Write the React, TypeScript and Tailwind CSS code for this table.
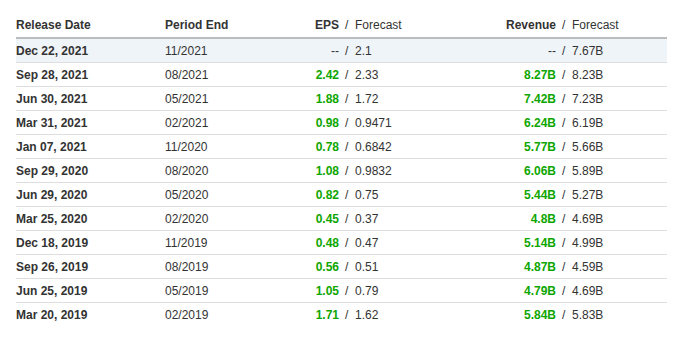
import React from 'react';

interface EarningsRow {
  date: string;
  period: string;
  eps: string;
  epsForecast: string;
  revenue: string;
  revenueForecast: string;
}

const rows: EarningsRow[] = [
  { date: 'Dec 22, 2021', period: '11/2021', eps: '--', epsForecast: '2.1', revenue: '--', revenueForecast: '7.67B' },
  { date: 'Sep 28, 2021', period: '08/2021', eps: '2.42', epsForecast: '2.33', revenue: '8.27B', revenueForecast: '8.23B' },
  { date: 'Jun 30, 2021', period: '05/2021', eps: '1.88', epsForecast: '1.72', revenue: '7.42B', revenueForecast: '7.23B' },
  { date: 'Mar 31, 2021', period: '02/2021', eps: '0.98', epsForecast: '0.9471', revenue: '6.24B', revenueForecast: '6.19B' },
  { date: 'Jan 07, 2021', period: '11/2020', eps: '0.78', epsForecast: '0.6842', revenue: '5.77B', revenueForecast: '5.66B' },
  { date: 'Sep 29, 2020', period: '08/2020', eps: '1.08', epsForecast: '0.9832', revenue: '6.06B', revenueForecast: '5.89B' },
  { date: 'Jun 29, 2020', period: '05/2020', eps: '0.82', epsForecast: '0.75', revenue: '5.44B', revenueForecast: '5.27B' },
  { date: 'Mar 25, 2020', period: '02/2020', eps: '0.45', epsForecast: '0.37', revenue: '4.8B', revenueForecast: '4.69B' },
  { date: 'Dec 18, 2019', period: '11/2019', eps: '0.48', epsForecast: '0.47', revenue: '5.14B', revenueForecast: '4.99B' },
  { date: 'Sep 26, 2019', period: '08/2019', eps: '0.56', epsForecast: '0.51', revenue: '4.87B', revenueForecast: '4.59B' },
  { date: 'Jun 25, 2019', period: '05/2019', eps: '1.05', epsForecast: '0.79', revenue: '4.79B', revenueForecast: '4.69B' },
  { date: 'Mar 20, 2019', period: '02/2019', eps: '1.71', epsForecast: '1.62', revenue: '5.84B', revenueForecast: '5.83B' },
];

const cols = 'grid grid-cols-[149px_130px_44px_161px_56px_112px] items-center';

const App: React.FC = () => {
  return (
    <div className="w-[683px] h-[341px] bg-white text-[12px] text-[#333] font-['Liberation_Sans',Arial,sans-serif] pt-[13px] px-[16px]">
      <div className={`${cols} h-[26px] border-b-2 border-[#bcbcbc]`}>
        <div className="font-bold">Release Date</div>
        <div className="font-bold">Period End</div>
        <div className="font-bold text-right">EPS</div>
        <div className="pl-[6px] whitespace-pre">/  Forecast</div>
        <div className="font-bold text-right">Revenue</div>
        <div className="pl-[6px] whitespace-pre">/  Forecast</div>
      </div>
      {rows.map((row, i) => (
        <div
          key={row.date}
          className={`${cols} h-[24px] ${i < rows.length - 1 ? 'border-b border-[#dedede]' : ''} ${i === 0 ? 'bg-[#eff4f8]' : ''}`}
        >
          <div className="font-bold">{row.date}</div>
          <div>{row.period}</div>
          <div className={`text-right ${row.eps !== '--' ? 'font-bold text-[#0ea600]' : ''}`}>{row.eps}</div>
          <div className="pl-[6px] whitespace-pre">{`/  ${row.epsForecast}`}</div>
          <div className={`text-right ${row.revenue !== '--' ? 'font-bold text-[#0ea600]' : ''}`}>{row.revenue}</div>
          <div className="pl-[6px] whitespace-pre">{`/  ${row.revenueForecast}`}</div>
        </div>
      ))}
    </div>
  );
};

export default App;
